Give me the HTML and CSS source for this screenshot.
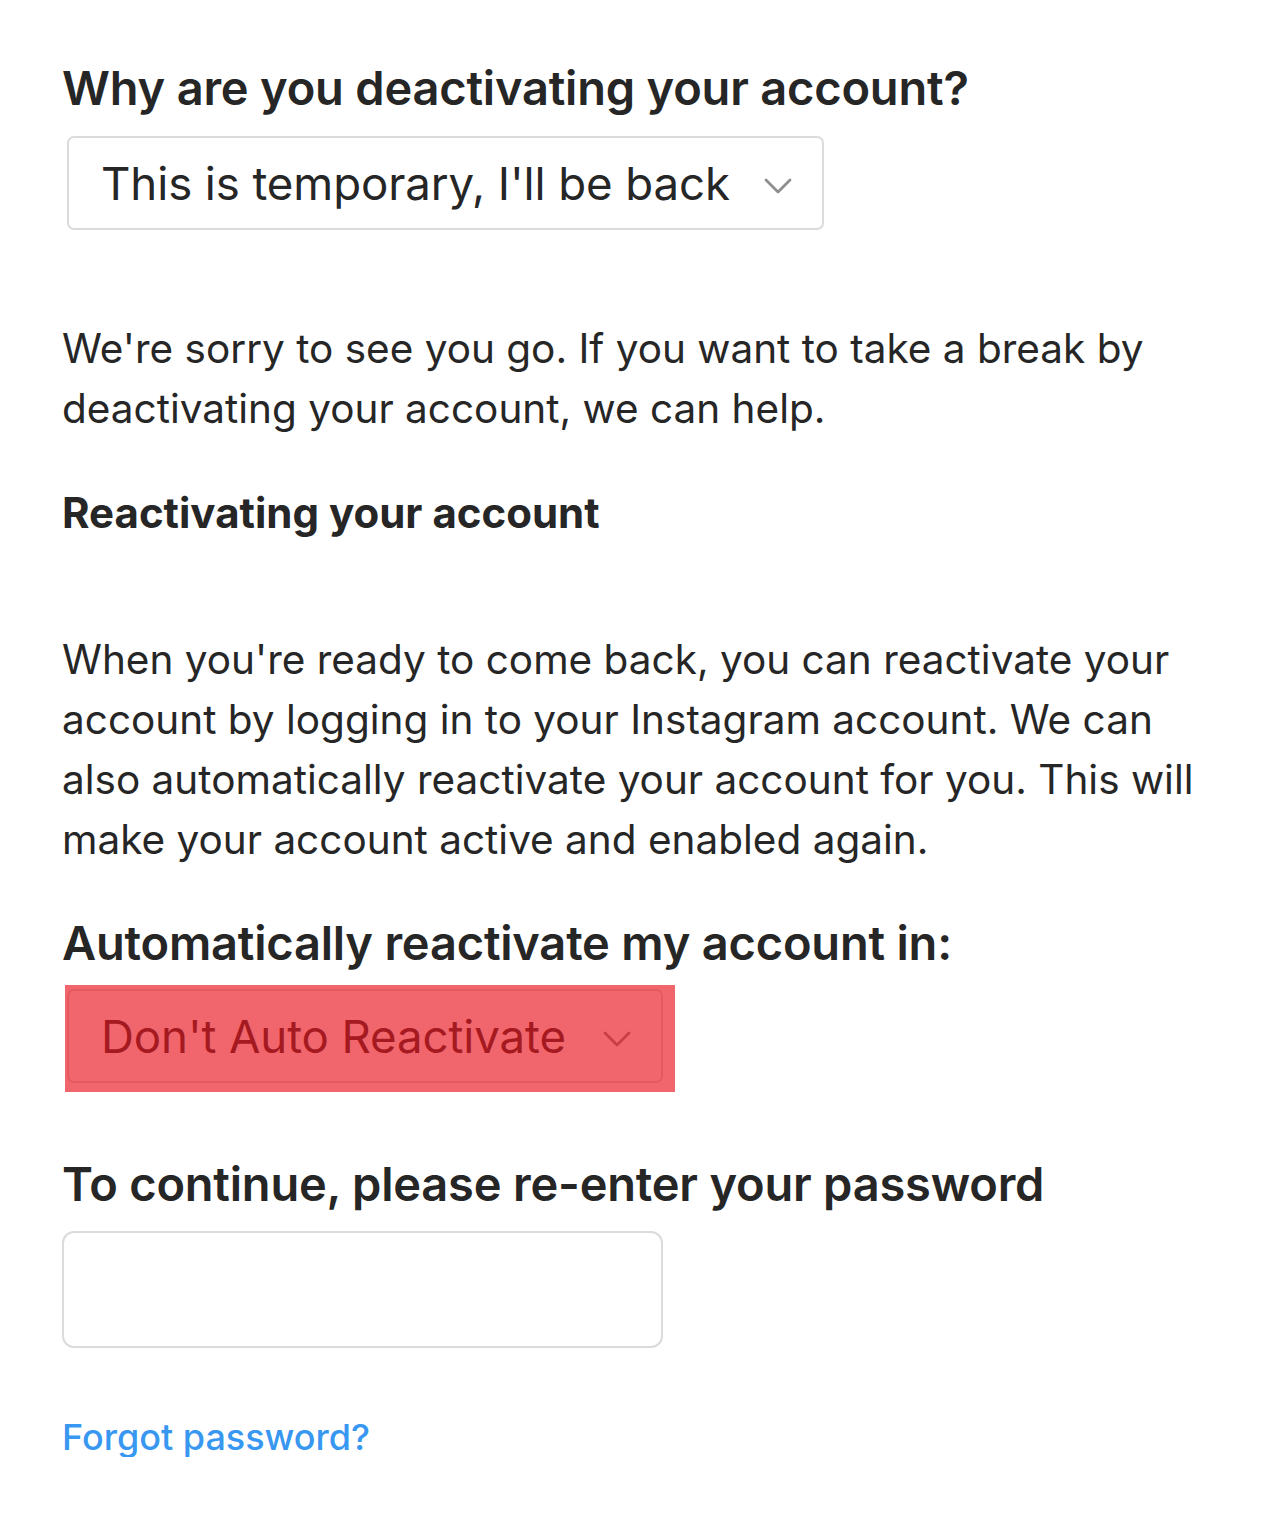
FILE: index.html
```html
<!DOCTYPE html>
<html lang="en">
<head>
<meta charset="utf-8">
<title>Deactivate account</title>
<link rel="stylesheet" href="styles.css">
</head>
<body>
<main class="page">
  <h1 class="title">Why are you deactivating your account?</h1>
  <div class="select select-wide">
    <span class="select-text">This is temporary, I'll be back</span>
    <svg class="chevron" viewBox="0 0 28 16" aria-hidden="true"><path d="M2 2 L14 14 L26 2" /></svg>
  </div>

  <p class="para para-first">We're sorry to see you go. If you want to take a break by deactivating your account, we can help.</p>

  <h3 class="subtitle">Reactivating your account</h3>

  <p class="para para-second">When you're ready to come back, you can reactivate your account by logging in to your Instagram account. We can also automatically reactivate your account for you. This will make your account active and enabled again.</p>

  <h2 class="title title-auto">Automatically reactivate my account in:</h2>
  <div class="highlight-wrap">
    <div class="select select-narrow">
      <span class="select-text">Don't Auto Reactivate</span>
      <svg class="chevron" viewBox="0 0 28 16" aria-hidden="true"><path d="M2 2 L14 14 L26 2" /></svg>
    </div>
    <div class="highlight"></div>
  </div>

  <h2 class="title title-pass">To continue, please re-enter your password</h2>
  <div class="password"></div>

  <a class="forgot" href="#">Forgot password?</a>
</main>
</body>
</html>
```

FILE: styles.css
```css
html, body {
  margin: 0;
  padding: 0;
  background: #ffffff;
}

body {
  font-family: Inter, "Noto Sans", "Liberation Sans", sans-serif;
  color: #262626;
}

.page {
  padding: 61px 0 0 62px;
  display: flex;
  flex-direction: column;
  align-items: flex-start;
}

.title {
  margin: 0;
  font-size: 47px;
  line-height: 53px;
  font-weight: 600;
  letter-spacing: -0.2px;
  white-space: nowrap;
}

.select {
  box-sizing: border-box;
  height: 94px;
  border: 2px solid #dbdbdb;
  border-radius: 7px;
  display: flex;
  align-items: center;
  justify-content: space-between;
  padding: 0 30px 0 32px;
  background: #fff;
}

.select-wide {
  margin: 22px 0 0 5px;
  width: 757px;
}

.select-text {
  font-size: 45.6px;
  font-weight: 400;
  letter-spacing: -0.1px;
  white-space: nowrap;
}

.chevron {
  width: 28px;
  height: 16px;
  fill: none;
  stroke: #8e8e8e;
  stroke-width: 2.8;
  stroke-linecap: round;
  stroke-linejoin: round;
  margin-top: 6px;
}

.para {
  margin: 0;
  font-size: 40.5px;
  line-height: 60px;
  font-weight: 400;
  letter-spacing: 0;
}

.para-first {
  margin-top: 89px;
  width: 1140px;
}

.subtitle {
  margin: 54px 0 0 0;
  font-size: 42px;
  line-height: 40px;
  font-weight: 700;
  letter-spacing: 0;
  white-space: nowrap;
}

.para-second {
  margin-top: 97px;
  width: 1180px;
}

.title-auto {
  margin-top: 46px;
}

.highlight-wrap {
  position: relative;
  margin: 20px 0 0 5px;
}

.select-narrow {
  width: 596px;
}

.highlight {
  position: absolute;
  left: -2px;
  top: -4px;
  right: -12px;
  bottom: -9px;
  background: rgba(232, 20, 29, 0.65);
}

.title-pass {
  margin-top: 74px;
}

.password {
  box-sizing: border-box;
  margin-top: 21px;
  width: 601px;
  height: 117px;
  border: 2px solid #dbdbdb;
  border-radius: 12px;
  background: #fff;
}

.forgot {
  margin-top: 69px;
  font-size: 36px;
  line-height: 40px;
  font-weight: 500;
  color: #3897f0;
  text-decoration: none;
}
```
